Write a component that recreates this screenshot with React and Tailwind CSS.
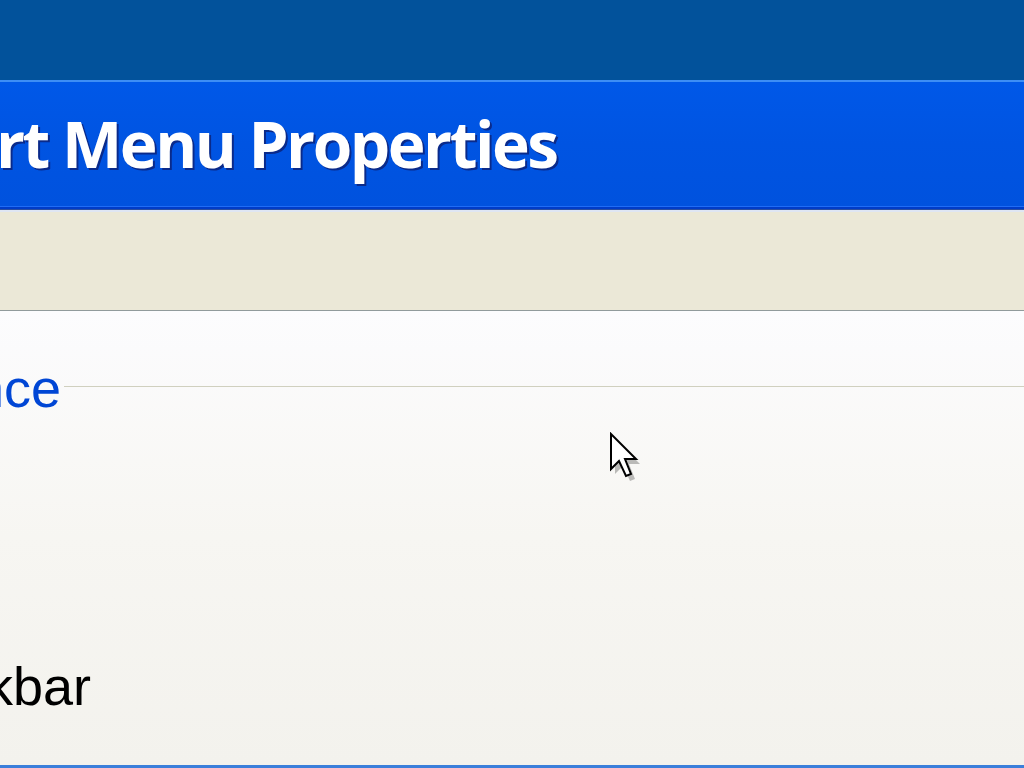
import React from 'react';

const Cursor = () => (
  <svg
    className="absolute left-[607px] top-[432px]"
    width="34"
    height="50"
    viewBox="0 0 34 50"
  >
    <polygon
      points="6,5 6,40 14,32 21,47 26,45 20,30 31,30"
      fill="#000"
      opacity="0.25"
      transform="translate(2,2)"
    />
    <polygon
      points="4,2 4,37 12,29 19,44 24,42 18,27 29,27"
      fill="#fff"
      stroke="#000"
      strokeWidth="2"
      strokeLinejoin="miter"
    />
  </svg>
);

const App = () => {
  return (
    <div className="relative w-[1024px] h-[768px] overflow-hidden bg-[#f4f3ee] font-['Liberation_Sans',Arial,sans-serif]">
      {/* desktop behind the window */}
      <div className="h-[80px] bg-[#02529b]" />

      {/* title bar */}
      <div className="h-[2px] bg-[#3d8ef5]" />
      <div className="h-[124px] flex items-center bg-gradient-to-b from-[#0058e8] via-[#0054e2] to-[#0052de]">
        <span className="ml-[-4px] mt-[0px] text-white font-bold text-[64px] tracking-[-2.5px] leading-none font-['Open_Sans',sans-serif] [text-shadow:2px_2px_0_#0a2a8a]">
          rt Menu Properties
        </span>
      </div>
      <div className="h-[1px] bg-[#1f6cf5]" />
      <div className="h-[2px] bg-[#003cc8]" />
      <div className="h-[1px] bg-[#2b4fa0]" />
      <div className="h-[2px] bg-[#dfe6f3]" />

      {/* tab strip */}
      <div className="h-[98px] bg-[#ebe8d7]" />
      <div className="h-[1px] bg-[#919b9c]" />

      {/* tab page */}
      <div className="relative h-[454px] bg-gradient-to-b from-[#fcfcfe] via-[#f7f6f2] to-[#f3f2ed]">
        <div className="flex items-center pt-[50px]">
          <span className="ml-[-56px] text-[54px] leading-[54px] text-[#0046d5]">
            ance
          </span>
          <div className="flex-1 h-[1px] bg-[#d0d0bf] ml-[3px] mt-[-4px]" />
        </div>
        <div className="pt-[244px]">
          <span className="ml-[-98px] text-[54px] leading-[54px] text-black">
            Taskbar
          </span>
        </div>
      </div>
      <div className="h-[5px] bg-[#3b7fda]" />

      <Cursor />
    </div>
  );
};

export default App;
